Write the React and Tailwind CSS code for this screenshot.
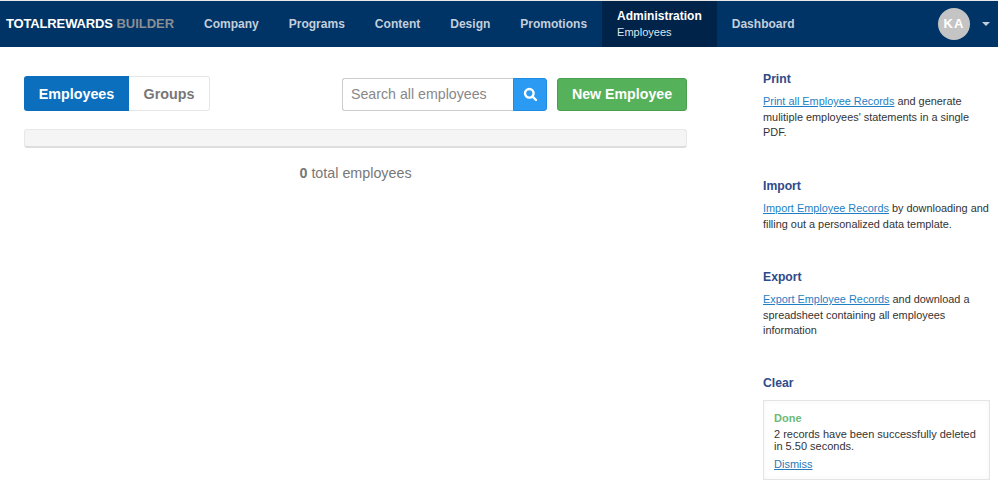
import React from "react";

function NavItem({ children }) {
  return <a className="flex items-center px-[15px] h-full text-[12.02px] font-bold text-[#c3cfdc]">{children}</a>;
}

function Section({ title, children, className }) {
  return (
    <div className={className}>
      <h4 className="text-[12.2px] leading-[18px] font-bold text-[#2f4a8a]">{title}</h4>
      <div className="mt-[6px] text-[10.9px] leading-[15.5px] text-[#333333]">{children}</div>
    </div>
  );
}

function L({ children }) {
  return <a className="text-[#1f7fc4] underline">{children}</a>;
}

export default function App() {
  return (
    <div className="w-[998px] h-[492px] overflow-hidden bg-white font-['Liberation_Sans',Arial,sans-serif]">
      <div className="h-px bg-[#e8e8e8]" />
      <header className="flex items-center h-[46px] bg-[#003366]">
        <div className="w-[189px] pl-[6px] text-[13px] font-bold tracking-[-0.15px] whitespace-nowrap">
          <span className="text-white">TOTALREWARDS</span>
          <span className="text-[#8a8f94] tracking-normal"> BUILDER</span>
        </div>
        <nav className="flex h-full">
          <NavItem>Company</NavItem>
          <NavItem>Programs</NavItem>
          <NavItem>Content</NavItem>
          <NavItem>Design</NavItem>
          <NavItem>Promotions</NavItem>
          <a className="flex flex-col justify-center px-[15px] h-full bg-[#00234a] text-white">
            <span className="text-[12px] leading-[15px] font-bold">Administration</span>
            <span className="text-[11px] leading-[15px] mt-px text-[#dfe5ec]">Employees</span>
          </a>
          <NavItem>Dashboard</NavItem>
        </nav>
        <div className="ml-auto flex items-center pr-[8px]">
          <div className="flex items-center justify-center w-8 h-8 rounded-full bg-[#c4c4c4] text-white text-[13px] font-bold tracking-[1px]">KA</div>
          <div className="ml-[12px] w-0 h-0 border-x-[4px] border-x-transparent border-t-[4px] border-t-[#c3cfdc]" />
        </div>
      </header>
      <div className="flex">
        <main className="w-[663px] ml-[24px] pt-[29px]">
          <div className="flex items-start">
            <div className="flex h-[35px]">
              <button className="w-[105px] pt-[2px] rounded-l-[3px] bg-[#0b6fbe] text-white text-[14.3px] font-bold">Employees</button>
              <button className="w-[81px] pt-[2px] rounded-r-[3px] border border-l-0 border-[#e6e6e6] text-[#777777] text-[14.3px] font-bold">Groups</button>
            </div>
            <div className="ml-auto mt-[2px] flex h-[33px]">
              <div className="flex items-center w-[171px] pl-2 border border-r-0 border-[#cccccc] rounded-l-[3px] text-[14.2px] text-[#888888]">Search all employees</div>
              <button className="flex items-center justify-center w-[34px] rounded-r-[3px] bg-[#2b9af3] border border-[#1f8be3]">
                <svg width="15" height="15" viewBox="0 0 15 15" fill="none" stroke="white" strokeWidth="2.4" strokeLinecap="round">
                  <circle cx="6.3" cy="6.3" r="4.3" />
                  <path d="M9.6 9.6 13 13" />
                </svg>
              </button>
              <button className="ml-[10px] w-[130px] rounded-[3px] bg-[#55b15a] border border-[#4a9f4e] text-white text-[14.2px] font-bold">New Employee</button>
            </div>
          </div>
          <div className="mt-[18px] h-[19px] rounded-[3px] bg-[#f5f5f5] border border-[#e8e8e8] border-b-2 border-b-[#dddddd]" />
          <p className="mt-[15px] text-center text-[14.3px] leading-[20px] text-[#777777]"><b>0</b> total employees</p>
        </main>
        <aside className="ml-[76px] w-[235px] pt-[23px]">
          <Section title="Print" className="h-[107px]">
            <L>Print all Employee Records</L> and generate<br />mulitiple employees' statements in a single<br />PDF.
          </Section>
          <Section title="Import" className="h-[91px]">
            <L>Import Employee Records</L> by downloading and<br />filling out a personalized data template.
          </Section>
          <Section title="Export" className="h-[106px]">
            <L>Export Employee Records</L> and download a<br />spreadsheet containing all employees<br />information
          </Section>
          <Section title="Clear">
            <div className="mt-[8px] w-[227px] h-[80px] border border-[#e4e4e4] pt-[10px] pl-[10px] pr-2 text-[11px] leading-[12px] shadow-[inset_0_0_6px_rgba(0,0,0,0.04)]">
              <div className="font-bold text-[#6cba78] leading-[14px]">Done</div>
              <div className="mt-[3px] text-[#333333]">2 records have been successfully deleted in 5.50 seconds.</div>
              <a className="block mt-[5px] leading-[14px] text-[#2b78b8] underline">Dismiss</a>
            </div>
          </Section>
        </aside>
      </div>
    </div>
  );
}
